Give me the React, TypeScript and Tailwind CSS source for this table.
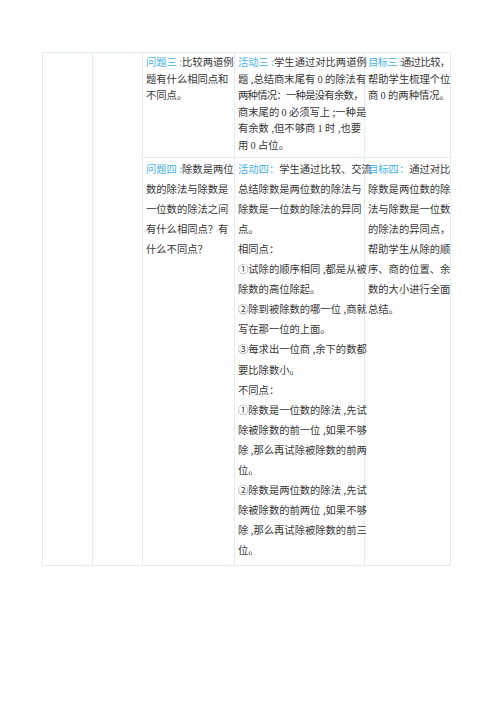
import React from 'react'

const Num = ({ children }: { children: React.ReactNode }) => (
  <span className="font-['Liberation_Serif',serif] leading-none">{children}</span>
)

const Label = ({ children }: { children: React.ReactNode }) => (
  <span className="text-[#47b2e6]">{children}</span>
)

const Lines = ({ lines }: { lines: React.ReactNode[] }) => (
  <>
    {lines.map((line, i) => (
      <div key={i} className="whitespace-nowrap">
        {line}
      </div>
    ))}
  </>
)

const App = () => {
  const cell = 'border border-[#e3eded] align-top pl-[3px] pr-0'

  return (
    <div className="w-[500px] h-[707px] bg-white pt-[52px] pl-[42px] font-['Noto_Sans_CJK_SC','Noto_Sans',sans-serif] text-[10.3px] text-[#363636]">
      <table className="table-fixed border-collapse w-[408px]">
        <colgroup>
          <col className="w-[50px]" />
          <col className="w-[50px]" />
          <col className="w-[92px]" />
          <col className="w-[130px]" />
          <col className="w-[86px]" />
        </colgroup>
        <tbody>
          {/* row 3 */}
          <tr className="leading-[16.6px]">
            <td className={cell} rowSpan={2}></td>
            <td className={cell} rowSpan={2}></td>
            <td className={`${cell} pt-[1px] pb-[3px]`}>
              <Lines
                lines={[
                  <><Label>问题三 :</Label>比较两道例</>,
                  '题有什么相同点和',
                  '不同点。',
                ]}
              />
            </td>
            <td className={`${cell} pt-[1px] pb-[3px]`}>
              <Lines
                lines={[
                  <><Label>活动三 :</Label>学生通过对比两道例</>,
                  <>题 ,总结商末尾有 <Num>0</Num> 的除法有</>,
                  <span className="tracking-[-0.7px]">两种情况：一种是没有余数，</span>,
                  <>商末尾的 <Num>0</Num> 必须写上 ;一种是</>,
                  <>有余数 ,但不够商 <Num>1</Num> 时 ,也要</>,
                  <>用 <Num>0</Num> 占位。</>,
                ]}
              />
            </td>
            <td className={`${cell} pt-[1px] pb-[3px]`}>
              <Lines
                lines={[
                  <span className="tracking-[-0.6px]"><Label>目标三 :</Label>通过比较，</span>,
                  '帮助学生梳理个位',
                  <>商 <Num>0</Num> 的两种情况。</>,
                ]}
              />
            </td>
          </tr>
          {/* row 4 */}
          <tr className="leading-[20.1px]">
            <td className={`${cell} pt-[1px] pb-[5px]`}>
              <Lines
                lines={[
                  <><Label>问题四 :</Label>除数是两位</>,
                  '数的除法与除数是',
                  '一位数的除法之间',
                  '有什么相同点？有',
                  '什么不同点？',
                ]}
              />
            </td>
            <td className={`${cell} pt-[1px] pb-[5px]`}>
              <Lines
                lines={[
                  <><Label>活动四：</Label>学生通过比较、交流</>,
                  '总结除数是两位数的除法与',
                  '除数是一位数的除法的异同',
                  '点。',
                  '相同点：',
                  '①试除的顺序相同 ,都是从被',
                  '除数的高位除起。',
                  '②除到被除数的哪一位 ,商就',
                  '写在那一位的上面。',
                  '③每求出一位商 ,余下的数都',
                  '要比除数小。',
                  '不同点：',
                  '①除数是一位数的除法 ,先试',
                  '除被除数的前一位 ,如果不够',
                  '除 ,那么再试除被除数的前两',
                  '位。',
                  '②除数是两位数的除法 ,先试',
                  '除被除数的前两位 ,如果不够',
                  '除 ,那么再试除被除数的前三',
                  '位。',
                ]}
              />
            </td>
            <td className={`${cell} pt-[1px] pb-[5px]`}>
              <Lines
                lines={[
                  <><Label>目标四：</Label>通过对比</>,
                  '除数是两位数的除',
                  '法与除数是一位数',
                  '的除法的异同点，',
                  '帮助学生从除的顺',
                  '序、商的位置、余',
                  '数的大小进行全面',
                  '总结。',
                ]}
              />
            </td>
          </tr>
        </tbody>
      </table>
    </div>
  )
}

export default App
